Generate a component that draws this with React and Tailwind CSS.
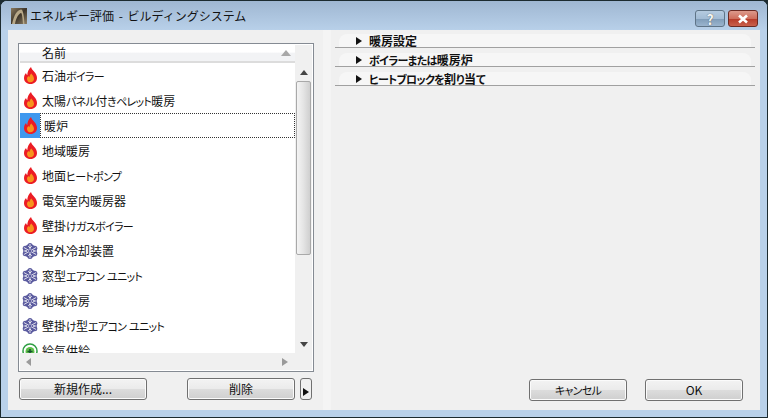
import React from "react";

const FONT = "font-['Noto_Sans_CJK_JP','Noto_Sans',sans-serif]";
const PALT = "[font-feature-settings:'palt']";

const items = [
  { name: "石油ボイラー", type: "heat" },
  { name: "太陽パネル付きペレット暖房", type: "heat" },
  { name: "暖炉", type: "heat", selected: true },
  { name: "地域暖房", type: "heat" },
  { name: "地面ヒートポンプ", type: "heat" },
  { name: "電気室内暖房器", type: "heat" },
  { name: "壁掛けガスボイラー", type: "heat" },
  { name: "屋外冷却装置", type: "cool" },
  { name: "窓型エアコン ユニット", type: "cool" },
  { name: "地域冷房", type: "cool" },
  { name: "壁掛け型エアコン ユニット", type: "cool" },
  { name: "給気供給", type: "air" },
];

const sections = ["暖房設定", "ボイラーまたは暖房炉", "ヒートブロックを割り当て"];

// the reference font sets kana much narrower than kanji
const JpText = ({ text }) =>
  text.split(/([ぁ-んァ-ヶー]+)/).map((part, i) =>
    i % 2 === 1 ? (
      <span key={i} className="text-[11px] tracking-[-0.7px]">{part}</span>
    ) : (
      <span key={i} className="whitespace-pre">{part}</span>
    )
  );

const Flame = () => (
  <svg width="13" height="17" viewBox="0 0 13 17" className="shrink-0">
    <path d="M7 0c.6 2.2 2 3.3 3.4 5 1.5 1.8 2.6 3.6 2.6 6 0 3.5-2.7 6-6.5 6S0 14.500 0 11c0-2.300 1-3.800 2-5 .2 1 .6 1.700 1.300 2.200C3.300 5 4.600 2.300 7 0z" fill="#ec1c24" />
    <path d="M7.400 6.500c.4 1.300 2.600 2.600 2.600 5.200 0 2.200-1.500 3.600-3.500 3.600S3 13.900 3 11.900c0-1.400.7-2.300 1.500-3 .2.600.4 1 .9 1.300.1-1.500.8-2.700 2-3.700z" fill="#f7941d" />
  </svg>
);

const Snow = () => (
  <svg width="16" height="16" viewBox="0 0 16 16" className="shrink-0">
    <g fill="#5b5b9f">
      <circle cx="8" cy="8" r="6.800" />
      <circle cx="8" cy="2.600" r="2.500" />
      <circle cx="8" cy="13.400" r="2.500" />
      <circle cx="3.200" cy="5.300" r="2.500" />
      <circle cx="12.800" cy="5.300" r="2.500" />
      <circle cx="3.200" cy="10.700" r="2.500" />
      <circle cx="12.800" cy="10.700" r="2.500" />
    </g>
    <g stroke="#fff" strokeWidth="0.800" fill="none">
      <path d="M8 1v14M1.900 4.500l12.200 7M14.100 4.500L1.900 11.500" />
      <path d="M6.200 3.200L8 5l1.800-1.800M6.200 12.800L8 11l1.800 1.800M2.500 7.800L5 8l-2.500.2M13.500 7.800L11 8l2.500.2" />
    </g>
    <circle cx="8" cy="8" r="1.200" fill="#5b5b9f" />
  </svg>
);

const Air = () => (
  <svg width="16" height="16" viewBox="0 0 16 16" className="shrink-0">
    <circle cx="8" cy="8" r="7" fill="#fff" stroke="#2f9e44" strokeWidth="1.500" />
    <circle cx="8" cy="8.500" r="4.500" fill="#5fbf4a" />
    <path d="M8 6v5M5.500 8.500h5" stroke="#14532d" strokeWidth="1.600" />
  </svg>
);

const icons = { heat: Flame, cool: Snow, air: Air };

const Btn = ({ label, className }) => (
  <button className={`h-[22px] rounded-[3px] border border-[#707070] bg-[linear-gradient(#f3f3f3_0%,#ebebeb_48%,#dcdcdc_52%,#cfcfcf_100%)] text-[12px] leading-none text-[#111] shadow-[inset_0_0_0_1px_#fbfbfb] ${PALT} ${className}`}>
    <JpText text={label} />
  </button>
);

const Arrow = ({ dir, color = "#444" }) => {
  const pts = { up: "0,5 4,0 8,5", down: "0,0 8,0 4,5", left: "5,0 5,8 0,4", right: "0,0 6,4 0,8" };
  const vertical = dir === "up" || dir === "down";
  const w = vertical ? 8 : dir === "right" ? 6 : 5;
  const h = vertical ? 5 : 8;
  return (
    <svg width={w} height={h} viewBox={`0 0 ${w} ${h}`}>
      <polygon points={pts[dir]} fill={color} />
    </svg>
  );
};

const ListBox = () => (
  <div className="flex h-[329px] w-[296px] flex-col border border-[#858b93] bg-white p-[1px]">
    <div className="flex min-h-0 flex-1">
      <div className="flex min-w-0 flex-1 flex-col">
        <div className="flex h-[18px] shrink-0 items-center border-b-2 border-[#dcdcdc] bg-[linear-gradient(#ffffff_0%,#ffffff_45%,#f2f3f5_50%,#f2f3f5_100%)]">
          <span className="ml-[22px] text-[12px] leading-none text-[#111]">名前</span>
          <span className="ml-auto mr-[4px] pb-[1px]"><svg width="10" height="6" viewBox="0 0 10 6"><polygon points="0,6 5,0 10,6" fill="#a8a8a8" /></svg></span>
        </div>
        <div className="min-h-0 flex-1 overflow-hidden">
          {items.map((item) => {
            const Icon = icons[item.type];
            return (
              <div key={item.name} className="flex h-[25px] items-center">
                <div className={`flex h-full w-[20px] shrink-0 items-center justify-center ${item.selected ? "bg-[#3f98ee]" : ""}`}>
                  <Icon />
                </div>
                <div className={`flex h-full flex-1 items-center pl-[2px] text-[12px] leading-none text-[#111] ${PALT} ${item.selected ? "border border-dotted border-[#333] pl-[3px]" : ""}`}>
                  <div><JpText text={item.name} /></div>
                </div>
              </div>
            );
          })}
        </div>
      </div>
      <div className="flex w-[17px] shrink-0 flex-col items-center bg-[#f0f0f0]">
        <div className="h-[18px] shrink-0" />
        <div className="flex h-[18px] shrink-0 items-center justify-center"><Arrow dir="up" /></div>
        <div className="h-[174px] w-[15px] shrink-0 rounded-[2px] border border-[#a9a9a9] bg-[linear-gradient(90deg,#f4f4f4,#e4e4e4_50%,#cfcfcf)]" />
        <div className="min-h-0 flex-1" />
        <div className="flex h-[18px] shrink-0 items-center justify-center"><Arrow dir="down" /></div>
      </div>
    </div>
    <div className="flex h-[17px] shrink-0 bg-[#f0f0f0]">
      <div className="flex flex-1 items-center justify-between px-[6px]">
        <Arrow dir="left" color="#9a9a9a" />
        <Arrow dir="right" color="#9a9a9a" />
      </div>
      <div className="w-[18px] shrink-0" />
    </div>
  </div>
);

const Logo = () => (
  <svg width="16" height="16" viewBox="0 0 16 16" className="shrink-0">
    <defs>
      <linearGradient id="logoBg" x1="0" y1="0" x2="1" y2="1">
        <stop offset="0" stopColor="#8a7a5e" />
        <stop offset="0.5" stopColor="#3d352a" />
        <stop offset="1" stopColor="#8f8168" />
      </linearGradient>
    </defs>
    <rect width="16" height="16" fill="url(#logoBg)" />
    <path d="M1 16C3 7 6 2 10 1.500c2-.2 3 6 3.500 14.500h-1.500C11.500 9 11 5 10 5 8 5 5 10 4 16z" fill="#b7a888" />
  </svg>
);

const App = () => (
  <div className={`flex h-[418px] w-[768px] flex-col overflow-hidden bg-[#1c2b30] ${FONT}`}>
    <div className="flex h-full flex-col rounded-t-[7px] border border-[#1c2b30] bg-[#b9d1ea]">
      <div className="flex h-[29px] shrink-0 items-center rounded-t-[6px] bg-[linear-gradient(#9fb7d2,#b8d0e9)] pl-[10px] pr-[9px]">
        <Logo />
        <span className="ml-[3px] whitespace-pre text-[12px] leading-none text-[#111] [word-spacing:2px]">エネルギー評価 - ビルディングシステム</span>
        <div className="ml-auto flex gap-[3px] self-start pt-[9px]">
          <div className="flex h-[17px] w-[30px] items-center justify-center rounded-[3px] border border-[#5f7487] bg-[linear-gradient(#b5cbe0_0%,#a3bcd5_50%,#7f9cb8_52%,#9ab4ce_100%)] text-[14px] font-bold leading-none text-[#f4f4f4] [text-shadow:0_0_1px_#333]">?</div>
          <div className="flex h-[17px] w-[30px] items-center justify-center rounded-[3px] border border-[#6b2a22] bg-[linear-gradient(#dd9a8c_0%,#cf6f5d_50%,#b63a28_52%,#c9604c_100%)]">
            <svg width="14" height="10" viewBox="0 0 14 10"><path d="M3 1.500l8 7M11 1.500l-8 7" stroke="#fff" strokeWidth="2.600" /></svg>
          </div>
        </div>
      </div>
      <div className="mx-[7px] flex min-h-0 flex-1 bg-[#f0f0f0]">
        <div className="flex w-[315px] shrink-0 flex-col pl-[10px] pt-[13px]">
          <ListBox />
          <div className="mt-[6px] flex items-start">
            <Btn label="新規作成..." className="ml-[1px] w-[128px]" />
            <Btn label="削除" className="ml-[40px] w-[108px]" />
            <div className="ml-[5px] flex h-[22px] w-[12px] items-end justify-center rounded-[3px] border border-[#707070] bg-[#f0f0f0] pb-[3px]">
              <Arrow dir="right" color="#111" />
            </div>
          </div>
        </div>
        <div className="w-[8px] shrink-0 bg-[#f4f4f4]" />
        <div className="flex min-w-0 flex-1 flex-col pl-[4px] pr-[5px] pt-[4px]">
          <div className="flex flex-col gap-[5px]">
            {sections.map((title) => (
              <div key={title} className="h-[14px] border-b border-[#a0a0a0] px-[4px]">
                <div className="flex h-[13px] items-center rounded-t-[8px] bg-[#f6f6f6] pl-[17px]">
                  <Arrow dir="right" color="#111" />
                  <div className={`ml-[7px] text-[12px] font-bold leading-none text-[#111] ${PALT}`}><JpText text={title} /></div>
                </div>
              </div>
            ))}
          </div>
          <div className="mb-[9px] mt-auto flex items-center justify-end pr-[12px]">
            <Btn label="キャンセル" className="w-[98px]" />
            <Btn label="OK" className="ml-[18px] w-[98px] border-[#2aa8dc] shadow-[inset_0_0_0_1px_#a8e4f8]" />
          </div>
        </div>
      </div>
      <div className="h-[7px] shrink-0" />
    </div>
  </div>
);

export default App;
